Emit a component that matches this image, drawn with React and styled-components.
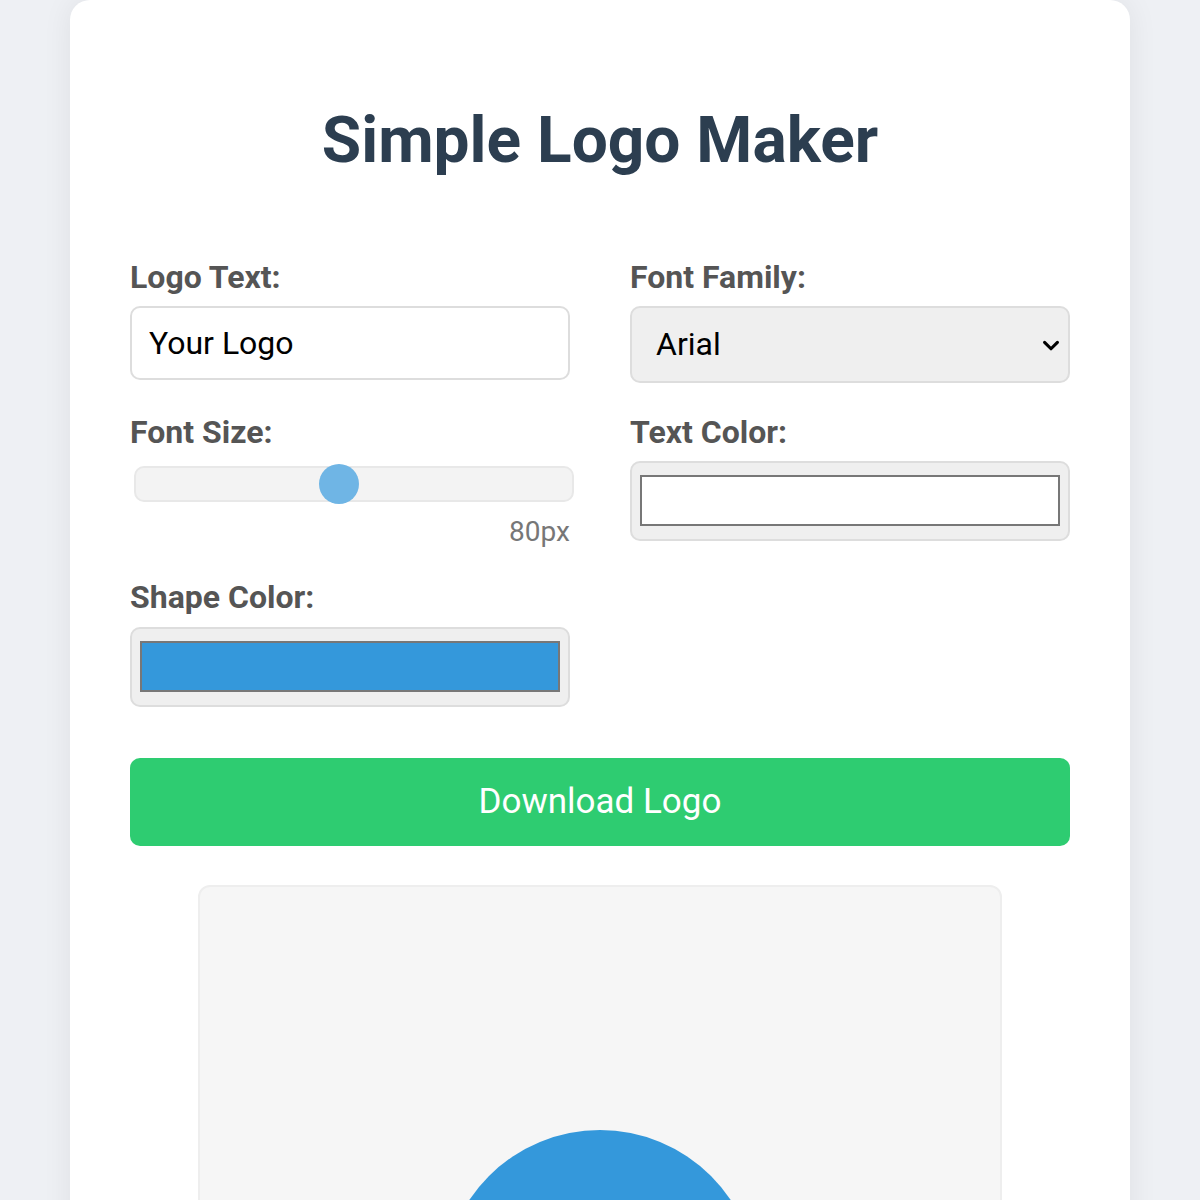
import React, { useState } from 'react';
import styled, { createGlobalStyle } from 'styled-components';

const Global = createGlobalStyle`
  html, body {
    margin: 0;
    padding: 0;
    background: #eef0f4;
    font-family: Roboto, "Liberation Sans", sans-serif;
  }
  * { box-sizing: border-box; }
`;

const App = () => {
  const [texto, cambiarTexto] = useState('Your Logo');
  const [fuente, cambiarFuente] = useState('Arial');
  const [tamano, cambiarTamano] = useState(80);
  const [colorTexto, cambiarColorTexto] = useState('#ffffff');
  const [colorForma, cambiarColorForma] = useState('#3498db');

  return (
    <>
      <Global />
      <Tarjeta>
        <Titulo>Simple Logo Maker</Titulo>
        <Rejilla>
          <Campo>
            <Etiqueta>Logo Text:</Etiqueta>
            <Entrada
              type="text"
              value={texto}
              onChange={e => cambiarTexto(e.target.value)}
            />
          </Campo>
          <Campo>
            <Etiqueta>Font Family:</Etiqueta>
            <ContenedorSelect>
              <Selector value={fuente} onChange={e => cambiarFuente(e.target.value)}>
                <option>Arial</option>
                <option>Verdana</option>
                <option>Georgia</option>
                <option>Courier New</option>
              </Selector>
              <Flecha viewBox="0 0 24 24">
                <path d="M5 8l7 7 7-7" fill="none" stroke="#000" strokeWidth="3.4" strokeLinecap="round" strokeLinejoin="round" />
              </Flecha>
            </ContenedorSelect>
          </Campo>
          <Campo>
            <Etiqueta>Font Size:</Etiqueta>
            <Deslizador
              type="range"
              min="20"
              max="150"
              value={tamano}
              onChange={e => cambiarTamano(Number(e.target.value))}
            />
            <Valor>{tamano}px</Valor>
          </Campo>
          <Campo>
            <Etiqueta>Text Color:</Etiqueta>
            <SelectorColor
              type="color"
              value={colorTexto}
              onChange={e => cambiarColorTexto(e.target.value)}
            />
          </Campo>
          <Campo>
            <Etiqueta>Shape Color:</Etiqueta>
            <SelectorColor
              type="color"
              value={colorForma}
              onChange={e => cambiarColorForma(e.target.value)}
            />
          </Campo>
        </Rejilla>
        <Boton>Download Logo</Boton>
        <Vista>
          <svg width="800" height="800" viewBox="0 0 800 800">
            <circle cx="400" cy="400" r="157" fill={colorForma} />
            <text
              x="400"
              y="400"
              textAnchor="middle"
              dominantBaseline="middle"
              fill={colorTexto}
              fontFamily={fuente === 'Arial' ? '"Liberation Sans", Arial, sans-serif' : fuente}
              fontSize={tamano}
            >
              {texto}
            </text>
          </svg>
        </Vista>
      </Tarjeta>
    </>
  );
}

export default App;

const Tarjeta = styled.div`
  width: 1060px;
  margin: 0 auto;
  background: #fff;
  border-radius: 20px;
  padding: 103px 60px 60px;
  box-shadow: 0 0 30px rgba(0,0,0,.07);
`;

const Titulo = styled.h1`
  margin: 0 0 81px;
  text-align: center;
  font-size: 64px;
  font-weight: 700;
  line-height: 75px;
  color: #2c3e50;
`;

const Rejilla = styled.div`
  display: grid;
  grid-template-columns: 1fr 1fr;
  column-gap: 60px;
  row-gap: 31px;
`;

const Campo = styled.div`
  display: flex;
  flex-direction: column;
`;

const Etiqueta = styled.label`
  display: block;
  font-size: 32px;
  font-weight: 700;
  line-height: 37.5px;
  color: #555;
  margin-bottom: 9px;
`;

const Entrada = styled.input`
  width: 100%;
  height: 74px;
  padding: 0 17px;
  font-family: Roboto, sans-serif;
  font-size: 32px;
  color: #000;
  border: 2px solid #ddd;
  border-radius: 10px;
  outline: none;
  background: #fff;
`;

const ContenedorSelect = styled.div`
  position: relative;
`;

const Selector = styled.select`
  appearance: none;
  width: 100%;
  height: 77px;
  padding: 0 24px;
  font-family: Roboto, sans-serif;
  font-size: 32px;
  color: #000;
  background: #efefef;
  border: 2px solid #ddd;
  border-radius: 10px;
  outline: none;
`;

const Flecha = styled.svg`
  position: absolute;
  right: 8px;
  top: 29px;
  width: 22px;
  height: 22px;
  pointer-events: none;
`;

const Deslizador = styled.input`
  appearance: none;
  -webkit-appearance: none;
  width: 100%;
  height: 40px;
  margin: 4px 0 11px 4px;
  background: transparent;

  &::-webkit-slider-runnable-track {
    height: 36px;
    background: #f3f3f3;
    border: 2px solid #e8e8e8;
    border-radius: 10px;
  }

  &::-webkit-slider-thumb {
    -webkit-appearance: none;
    width: 40px;
    height: 40px;
    margin-top: -4px;
    border-radius: 50%;
    background: #6fb5e5;
    border: none;
  }
`;

const Valor = styled.span`
  text-align: right;
  font-size: 28px;
  line-height: 33px;
  color: #777;
`;

const SelectorColor = styled.input`
  -webkit-appearance: none;
  width: 100%;
  height: 80px;
  margin: 1px 0 0;
  padding: 0;
  background: #efefef;
  border: 2px solid #ddd;
  border-radius: 10px;
  cursor: pointer;

  &::-webkit-color-swatch-wrapper {
    padding: 12px 8px 13px;
  }

  &::-webkit-color-swatch {
    border: 2px solid #777;
    border-radius: 0;
  }
`;

const Boton = styled.button`
  display: block;
  width: 100%;
  height: 88px;
  margin-top: 51px;
  border: none;
  border-radius: 10px;
  background: #2ecc71;
  color: #fff;
  font-family: Roboto, sans-serif;
  font-size: 35px;
  cursor: pointer;
`;

const Vista = styled.div`
  width: 804px;
  margin: 39px auto 0;
  background: #f6f6f6;
  border: 2px solid #eee;
  border-radius: 12px;
  line-height: 0;
  overflow: hidden;
`;
